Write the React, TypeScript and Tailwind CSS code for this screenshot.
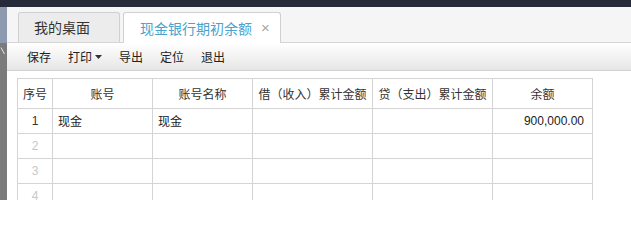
import React from 'react';

const columns = [
  { title: '序号', width: 'w-[35px]' },
  { title: '账号', width: 'w-[100px]' },
  { title: '账号名称', width: 'w-[100px]' },
  { title: '借（收入）累计金额', width: 'w-[120px]' },
  { title: '贷（支出）累计金额', width: 'w-[120px]' },
  { title: '余额', width: 'w-[100px]' },
];

const rows = [
  { no: 1, account: '现金', name: '现金', debit: '', credit: '', balance: '900,000.00' },
  { no: 2, account: '', name: '', debit: '', credit: '', balance: '' },
  { no: 3, account: '', name: '', debit: '', credit: '', balance: '' },
  { no: 4, account: '', name: '', debit: '', credit: '', balance: '' },
];

const toolbarItems = ['保存', '打印', '导出', '定位', '退出'];

export default function App() {
  return (
    <div className="w-[631px] h-[200px] overflow-hidden bg-white font-['Noto_Sans_CJK_SC',sans-serif] text-[#222]">
      {/* top window bar */}
      <div className="h-[7px] bg-[#252b3b]" />

      <div className="flex h-[193px]">
        {/* collapsed side menu */}
        <div className="w-[7px] h-[193px] flex flex-col shrink-0">
          <div className="h-[36px] shrink-0 bg-[#8d99ae]" />
          <div className="h-[157px] shrink-0 bg-[#7b7b7b] pt-[4px]">
            <svg width="7" height="8" viewBox="0 0 7 8" className="block">
              <path d="M1 0.5L4.5 7" stroke="#e4e4e4" strokeWidth="1" />
            </svg>
          </div>
        </div>

        <div className="flex-1 flex flex-col">
          {/* tabs */}
          <div className="h-[36px] shrink-0 bg-[#f5f5f5] border-b border-[#d6d6d6] flex items-end pl-[11px] gap-[3px]">
            <div className="w-[102px] h-[30px] bg-[#ececec] border border-b-0 border-[#d0d0d0] rounded-t-[3px] flex items-center pl-[15px] text-[14px] text-[#333]">
              我的桌面
            </div>
            <div className="w-[158px] h-[31px] -mb-px bg-white border border-b-0 border-[#d0d0d0] rounded-t-[3px] flex items-center pl-[16px] text-[14px] text-[#4aa3cc]">
              <span>现金银行期初余额</span>
              <span className="ml-[9px] text-[#a8a8a8] text-[15px] font-['Liberation_Sans',sans-serif] font-light">×</span>
            </div>
          </div>

          {/* toolbar */}
          <div className="h-[28px] shrink-0 bg-gradient-to-b from-white to-[#e6e6e6] border-b border-[#d2d2d2] flex items-center pl-[20px] gap-[17px] text-[12px] text-[#222]">
            {toolbarItems.map((item) => (
              <span key={item} className="flex items-center">
                {item}
                {item === '打印' && (
                  <svg width="7" height="4" viewBox="0 0 7 4" className="ml-[3px]">
                    <path d="M0 0h7L3.5 4z" fill="#333" />
                  </svg>
                )}
              </span>
            ))}
          </div>

          {/* grid */}
          <div className="pl-[10px] pt-[7px]">
            <table className="table-fixed border-collapse text-[12px]">
              <thead>
                <tr className="h-[30px]">
                  {columns.map((col) => (
                    <th
                      key={col.title}
                      className={`${col.width} border border-[#d4d4d4] font-normal text-center text-[#333] p-0 whitespace-nowrap`}
                    >
                      {col.title}
                    </th>
                  ))}
                </tr>
              </thead>
              <tbody>
                {rows.map((row) => (
                  <tr key={row.no} className="h-[25px]">
                    <td className={`border border-[#d4d4d4] text-center p-0 font-['Liberation_Sans',sans-serif] ${row.no === 1 ? 'text-[#333]' : 'text-[#c8c8c8]'}`}>
                      {row.no}
                    </td>
                    <td className="border border-[#d4d4d4] px-[5px]">{row.account}</td>
                    <td className="border border-[#d4d4d4] px-[5px]">{row.name}</td>
                    <td className="border border-[#d4d4d4] px-[5px]">{row.debit}</td>
                    <td className="border border-[#d4d4d4] px-[5px]">{row.credit}</td>
                    <td className="border border-[#d4d4d4] pr-[8px] text-right font-['Liberation_Sans',sans-serif] text-[#222]">
                      {row.balance}
                    </td>
                  </tr>
                ))}
              </tbody>
            </table>
          </div>
        </div>
      </div>
    </div>
  );
}
